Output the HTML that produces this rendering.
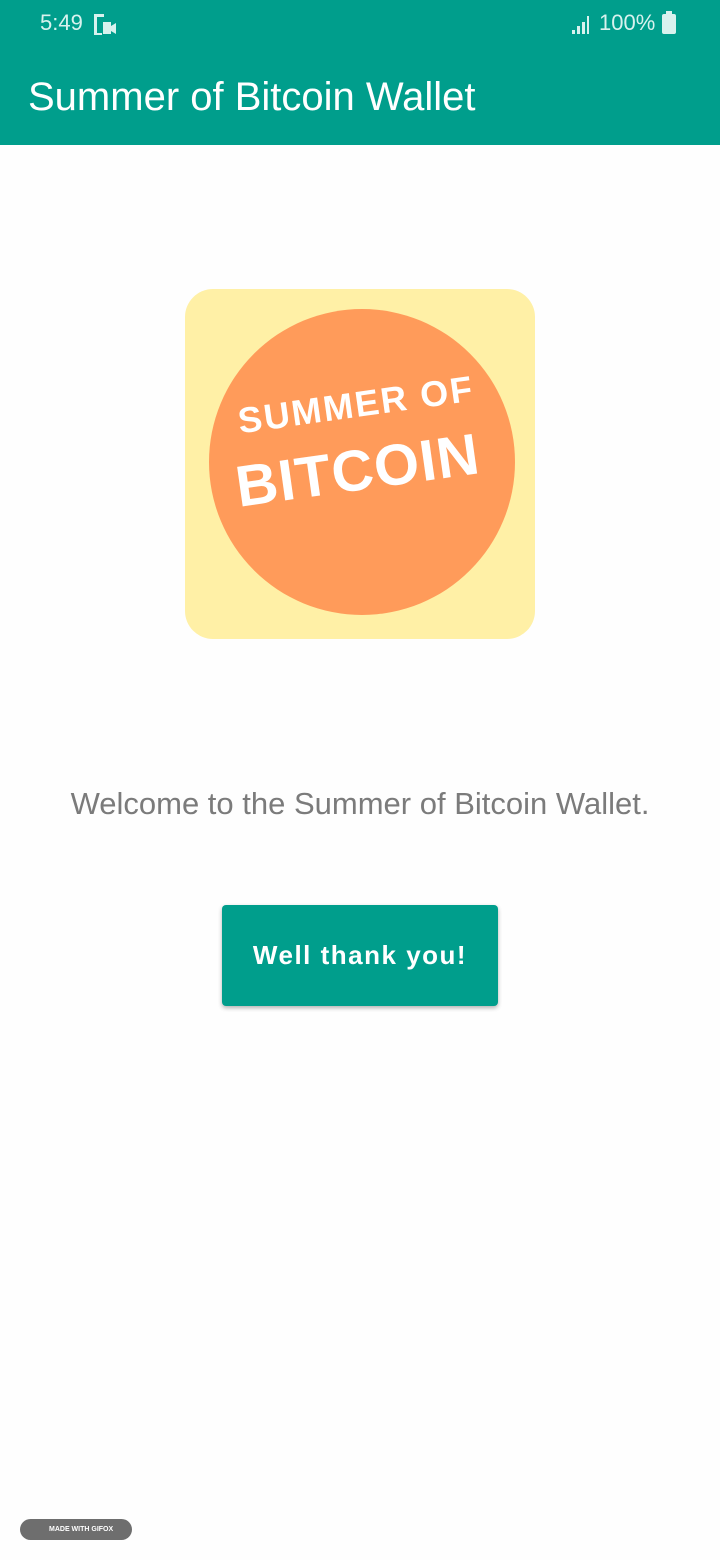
<!DOCTYPE html>
<html><head><style>
body{margin:0;width:720px;height:1560px;background:#fefefe;font-family:"Liberation Sans",sans-serif;position:relative;overflow:hidden}
.bar{position:absolute;left:0;top:0;width:720px;height:145px;background:#009e8c}
.st{position:absolute;top:10px;font-size:22px;color:#d8f2ee}
.title{position:absolute;left:28px;top:75px;font-size:40px;color:#fff}
.logo{position:absolute;left:185px;top:289px;width:350px;height:350px;background:#fff0a6;border-radius:28px;overflow:hidden}
.circ{position:absolute;left:24px;top:20px;width:306px;height:306px;border-radius:50%;background:#ff9b5a}
.welcome{position:absolute;left:0;width:720px;top:786px;text-align:center;font-size:31px;color:#7b7b7b}
.btn{position:absolute;left:222px;top:905px;width:276px;height:101px;background:#009e8c;border-radius:4px;box-shadow:0 2px 4px rgba(0,0,0,.3);color:#fff;font-size:26px;letter-spacing:1.5px;text-align:center;line-height:101px;font-weight:bold}
.badge{position:absolute;left:20px;top:1519px;width:112px;height:21px;border-radius:11px;background:#6e6e6e;color:#fff;font-size:7px;font-weight:bold;line-height:21px;padding-left:29px;box-sizing:border-box}
</style></head><body>
<div class="bar"></div>
<div class="st" style="left:40px">5:49</div>
<svg style="position:absolute;left:92px;top:13px" width="26" height="22"><path d="M2 1h10v3H5v16h5v2H2z" fill="#d8f2ee"/><rect x="11" y="9" width="8" height="12" fill="#d8f2ee"/><path d="M19 13l5-3v11l-5-3z" fill="#d8f2ee"/></svg>
<svg style="position:absolute;left:570px;top:14px" width="22" height="20"><path d="M2 20h3v-4H2zM7 20h3v-8H7zM12 20h3V8h-3zM17 20h2V2h-2z" fill="#d8f2ee"/></svg>
<div class="st" style="left:599px">100%</div>
<div style="position:absolute;left:662px;top:14px;width:14px;height:20px;background:#d8f2ee;border-radius:2px"></div>
<div style="position:absolute;left:666px;top:11px;width:6px;height:4px;background:#d8f2ee"></div>
<div class="title">Summer of Bitcoin Wallet</div>
<div class="logo"><div class="circ"></div>
<div style="position:absolute;left:52px;top:95px;font-size:36px;font-weight:bold;color:#fff;transform:rotate(-8deg);letter-spacing:2px">SUMMER OF</div>
<div style="position:absolute;left:50px;top:148px;font-size:58px;font-weight:bold;color:#fff;transform:rotate(-8deg);letter-spacing:1px">BITCOIN</div>
</div>
<div class="welcome">Welcome to the Summer of Bitcoin Wallet.</div>
<div class="btn">Well thank you!</div>
<div class="badge">MADE WITH GIFOX</div>
</body></html>
